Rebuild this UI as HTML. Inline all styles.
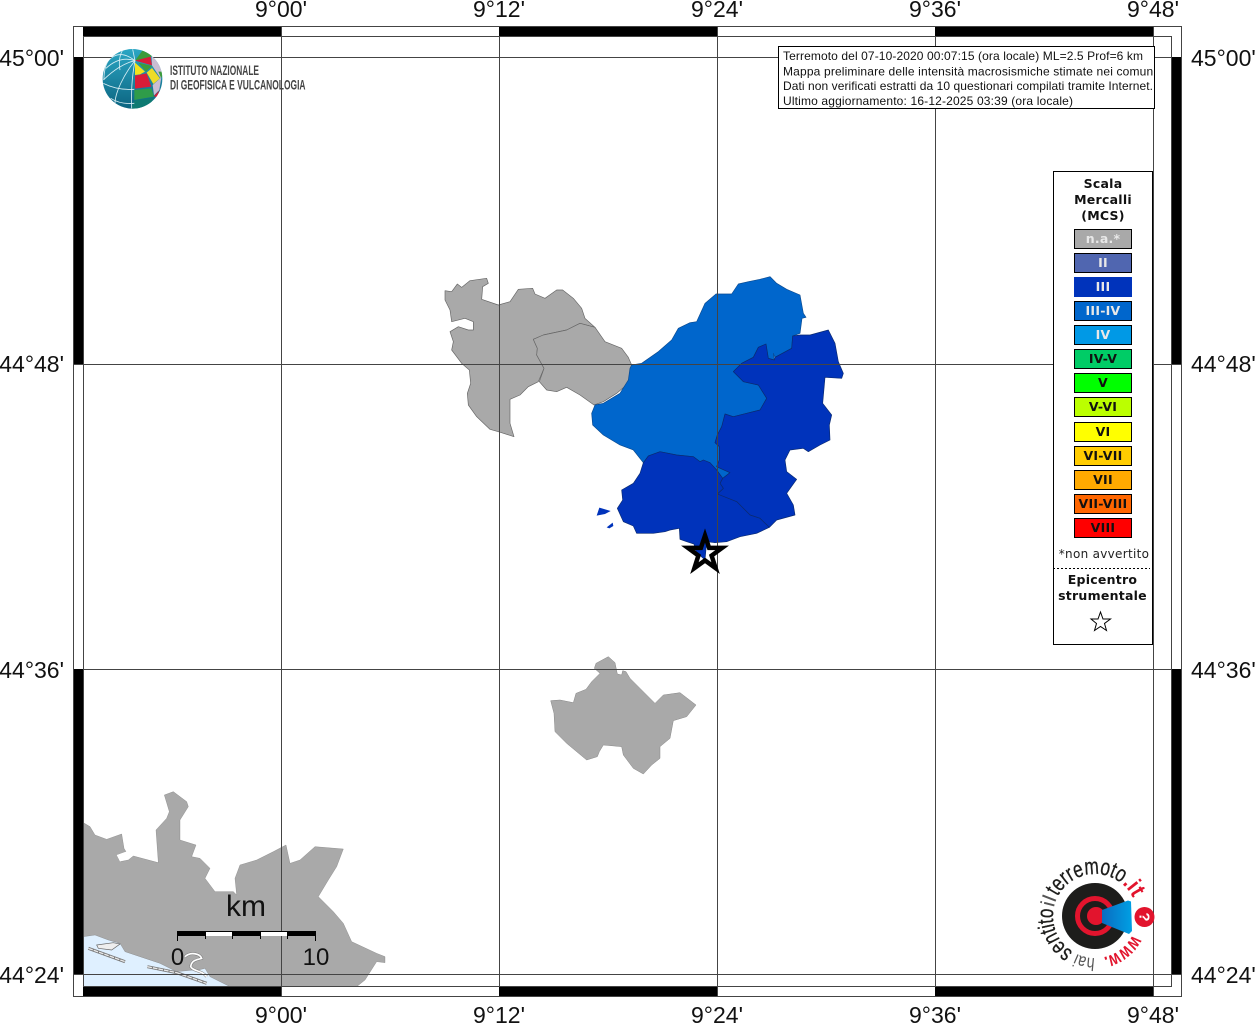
<!DOCTYPE html>
<html><head><meta charset="utf-8"><style>
html,body{margin:0;padding:0;background:#fff;width:1255px;height:1024px;overflow:hidden}
svg{display:block;filter:blur(.3px)}
.l{font-family:"Liberation Sans",sans-serif;font-size:23px;fill:#111}
.d{font-family:"DejaVu Sans",sans-serif;font-size:12.5px;font-weight:bold;text-anchor:middle;letter-spacing:.25px}
.i{font-family:"Liberation Sans",sans-serif;font-size:12px;fill:#111}
</style></head><body>
<svg width="1255" height="1024" viewBox="0 0 1255 1024" xmlns="http://www.w3.org/2000/svg">
<defs>
<clipPath id="map"><rect x="83" y="36" width="1088" height="950"/></clipPath>
<clipPath id="ball"><circle cx="127.5" cy="116.5" r="89.5"/></clipPath>
<clipPath id="ib"><rect x="779" y="47" width="375" height="61"/></clipPath>
<linearGradient id="bg" x1="0" y1="0" x2="0" y2="1"><stop offset="0" stop-color="#2ba6c4"/><stop offset="1" stop-color="#0c6480"/></linearGradient>
<linearGradient id="cone" x1="0" y1="0" x2="1" y2="0"><stop offset="0" stop-color="#0a6cc0"/><stop offset="1" stop-color="#00a0e4"/></linearGradient>
<path id="ring" d="M1095 958A42 42 0 1 1 1095 874A42 42 0 1 1 1095 958"/>
</defs>
<rect width="1255" height="1024" fill="#fff"/>

<g clip-path="url(#map)">
<!-- Bottom-left region -->
<g transform="translate(70,780) scale(.33333)">
<rect x="30" y="465" width="480" height="170" fill="#dff0ff"/>
<polygon fill="#a9a9a9" stroke="#777" stroke-width="1" stroke-linejoin="round" points="30,120 40,128 60,140 75,165 110,178 155,162 162,205 168,215 140,225 150,245 175,240 190,228 265,248 258,150 290,115 298,95 283,45 310,35 350,65 355,80 330,120 330,180 378,195 365,230 390,235 420,265 405,295 435,335 490,335 500,345 495,295 510,255 560,240 610,215 648,195 660,250 690,240 735,200 820,207 800,260 775,300 745,350 790,395 820,430 845,485 920,520 945,530 945,548 920,545 885,600 860,620 860,640 480,640 480,620 420,590 405,565 385,570 370,570 320,575 270,550 225,535 165,515 150,490 115,480 75,465 40,470 30,472"/>
<path d="M345 530C360 515 390 520 395 535C380 540 365 540 362 560C370 575 395 570 410 590" fill="none" stroke="#777" stroke-width="8"/>
<path d="M345 530C360 515 390 520 395 535C380 540 365 540 362 560C370 575 395 570 410 590" fill="none" stroke="#fff" stroke-width="5"/>
<polygon fill="#fff" points="140,225 168,215 165,235 150,245"/>
<polygon fill="#eee" stroke="#666" stroke-width="2" points="80,495 130,488 150,492 125,510 85,505"/>
<path d="M55 505L165 545M232 560L320 578M320 578L410 610" stroke="#777" stroke-width="9" fill="none"/>
<path d="M55 505L165 545M232 560L320 578M320 578L410 610" stroke="#e8e8e8" stroke-width="4" fill="none" stroke-dasharray="14 3"/>
</g>

<!-- NW gray -->
<g transform="translate(440,270) scale(.33333)" fill="#a9a9a9" stroke="#666" stroke-width="2" stroke-linejoin="round">
<polygon points="15,62 35,65 52,42 65,52 90,32 140,25 145,40 128,50 125,88 175,105 210,95 235,58 278,55 285,72 315,85 350,60 368,60 400,85 425,115 435,145 465,172 420,160 380,180 310,195 280,208 292,235 290,255 312,295 295,335 265,350 240,375 210,388 210,460 222,500 175,485 150,478 110,440 85,405 82,370 92,340 88,300 65,280 35,240 40,215 30,185 55,170 85,180 100,180 100,155 75,145 35,155 30,120 15,90"/>
<polygon points="280,208 310,195 380,180 420,160 465,172 495,215 545,235 565,262 575,285 565,340 530,370 490,395 462,405 420,375 380,352 350,365 320,360 298,335 312,295 290,255 292,235"/>
</g>

<!-- Blue regions -->
<g transform="translate(590,270) scale(.33333)" stroke="#0a2a70" stroke-width="2" stroke-linejoin="round">
<polygon fill="#0066cc" stroke="#0a4a90" points="125,285 155,280 205,245 245,210 265,175 300,158 320,155 345,100 378,72 425,72 445,42 475,35 510,28 540,20 560,40 590,58 630,75 640,130 648,142 636,145 630,190 608,198 605,235 555,262 550,250 553,270 535,265 528,222 505,232 490,262 455,280 430,305 460,335 505,345 530,385 510,420 470,430 430,440 405,432 395,470 382,495 375,518 388,530 388,570 380,590 420,608 398,625 380,600 360,578 340,570 330,575 310,560 260,555 210,545 175,558 160,578 130,540 90,525 40,495 8,465 5,430 15,405 40,400 90,370 115,330 120,295"/>
<polygon fill="#0033bb" points="430,305 455,280 490,262 505,232 528,222 535,265 553,270 555,262 605,235 608,198 630,195 660,195 715,180 735,220 745,275 760,310 755,325 705,322 698,400 725,435 718,465 720,510 690,525 655,545 640,535 600,540 585,570 590,605 620,628 590,670 610,705 615,735 560,750 538,772 510,745 480,735 440,695 382,672 400,655 390,640 398,625 420,608 380,590 388,570 388,530 375,518 382,495 395,470 405,432 430,440 470,430 510,420 530,385 505,345 460,335"/>
<polygon fill="#0033bb" points="160,578 175,558 210,545 260,555 310,560 330,575 340,570 360,578 380,600 398,625 390,640 400,655 382,672 440,695 480,735 510,745 538,772 500,790 450,800 410,815 375,818 350,815 345,870 318,845 312,822 290,815 270,808 268,775 240,780 225,785 190,790 140,790 130,768 100,755 82,715 98,690 95,660 130,640 150,610"/>
<polygon fill="#0033bb" stroke="none" points="20,737 28,713 62,723 45,732"/>
<polygon fill="#0033bb" stroke="none" points="50,772 68,758 70,768 58,775"/>
</g>

<!-- South gray -->
<g transform="translate(540,650) scale(.33333)">
<polygon fill="#a9a9a9" stroke="#888" stroke-width="1.5" stroke-linejoin="round" points="32,152 60,150 100,158 108,130 138,118 155,95 180,70 163,55 168,40 205,20 225,38 232,72 245,75 248,62 258,65 270,85 300,115 345,160 370,135 420,128 468,165 440,200 400,212 390,265 360,290 360,325 335,345 310,372 280,355 250,315 245,290 190,285 178,305 172,320 140,330 80,280 45,245 42,190"/>
</g>
</g>

<!-- Grid -->
<g stroke="#444" stroke-width="1" fill="none" shape-rendering="crispEdges">
<path d="M281.5 26V996M499.5 26V996M717.5 26V996M935.5 26V996M1153.5 26V996"/>
<path d="M73 57.5H1181M73 364.5H1181M73 669.5H1181M73 974.5H1181"/>
</g>

<!-- Frame -->
<g fill="#000" shape-rendering="crispEdges">
<rect x="83" y="26" width="198" height="10"/><rect x="499" y="26" width="218" height="10"/><rect x="935" y="26" width="218" height="10"/>
<rect x="83" y="987" width="198" height="9"/><rect x="499" y="987" width="218" height="9"/><rect x="935" y="987" width="218" height="9"/>
<rect x="73" y="57" width="10" height="307"/><rect x="73" y="669" width="10" height="305"/>
<rect x="1172" y="57" width="9" height="307"/><rect x="1172" y="669" width="9" height="305"/>
</g>
<g fill="none" stroke="#444" stroke-width="1" shape-rendering="crispEdges">
<rect x="73.5" y="26.5" width="1108" height="970"/>
<rect x="83.5" y="36.5" width="1088" height="950"/>
</g>

<!-- Axis labels -->
<g text-anchor="middle">
<text class="l" x="281" y="17">9°00'</text><text class="l" x="499" y="17">9°12'</text><text class="l" x="717" y="17">9°24'</text><text class="l" x="935" y="17">9°36'</text><text class="l" x="1153" y="17">9°48'</text>
<text class="l" x="281" y="1023">9°00'</text><text class="l" x="499" y="1023">9°12'</text><text class="l" x="717" y="1023">9°24'</text><text class="l" x="935" y="1023">9°36'</text><text class="l" x="1153" y="1023">9°48'</text>
</g>
<g text-anchor="end">
<text class="l" x="64" y="66">45°00'</text><text class="l" x="64" y="372">44°48'</text><text class="l" x="64" y="678">44°36'</text><text class="l" x="64" y="983">44°24'</text>
</g>
<g>
<text class="l" x="1191" y="66">45°00'</text><text class="l" x="1191" y="372">44°48'</text><text class="l" x="1191" y="678">44°36'</text><text class="l" x="1191" y="983">44°24'</text>
</g>

<!-- Epicentre star -->
<polygon points="705,535.5 709.1,547.9 722.1,547.9 711.6,555.6 715.6,568.1 705,560.4 694.4,568.1 698.4,555.6 687.9,547.9 700.9,547.9" fill="none" stroke="#000" stroke-width="4.5"/>

<!-- Scale bar -->
<g shape-rendering="crispEdges">
<rect x="177" y="931" width="139" height="5" fill="#000"/>
<rect x="206" y="932" width="26" height="4" fill="#fff"/><rect x="261" y="932" width="26" height="4" fill="#fff"/>
<path d="M177.5 931V941M315.5 931V941M205.5 936V939M232.5 936V939M260.5 936V939M287.5 936V939" stroke="#000" fill="none"/>
</g>
<text x="246" y="916" text-anchor="middle" font-family="Liberation Sans,sans-serif" font-size="30" fill="#111">km</text>
<text x="177.5" y="965" text-anchor="middle" font-family="Liberation Sans,sans-serif" font-size="24" fill="#111">0</text>
<text x="316" y="965" text-anchor="middle" font-family="Liberation Sans,sans-serif" font-size="24" fill="#111">10</text>

<!-- INGV logo -->
<g transform="translate(90,40) scale(.33333)">
<circle cx="127.5" cy="116.5" r="89.5" fill="url(#bg)"/>
<g clip-path="url(#ball)">
<polygon fill="#3d9b3a" points="135,62 160,28 190,45 180,52"/>
<polygon fill="#d91c38" points="135,62 182,50 186,76 165,70"/>
<polygon fill="#c9bdd2" points="185,48 220,75 212,115 205,105 186,76"/>
<polygon fill="#f3e31c" points="135,68 165,95 150,103 135,105"/>
<polygon fill="#3d9b3a" points="145,68 186,78 168,95"/>
<polygon fill="#3d9b3a" points="205,95 220,95 214,115"/>
<polygon fill="#eedc28" points="170,98 186,84 210,115 190,132"/>
<polygon fill="#d91c38" points="135,107 170,100 184,140 135,146"/>
<polygon fill="#c9bdd2" points="188,135 214,112 208,150 192,166"/>
<polygon fill="#d91c38" points="192,168 208,152 200,172"/>
<polygon fill="#2f9c49" points="133,150 184,145 192,170 133,180"/>
<polygon fill="#0e7a72" points="133,182 192,172 170,215 120,215"/>
<g fill="none" stroke="#d8eef4" stroke-width="2.5">
<path d="M135 62C100 35 75 40 55 62C40 85 42 120 42 120"/>
<path d="M135 62C105 68 70 90 40 120"/>
<path d="M135 62C100 105 75 160 75 190"/>
<path d="M135 62C124 120 124 160 125 205"/>
<path d="M100 28C90 40 85 65 90 90"/>
<path d="M48 85C75 60 105 52 135 62"/>
<path d="M40 130C70 145 100 150 133 148"/>
<path d="M62 175C85 190 110 192 133 190"/>
<path d="M135 62L128 28"/>
</g>
</g>
</g>
<text x="170" y="75" font-family="Liberation Sans,sans-serif" font-weight="bold" font-size="13.5" fill="#444" textLength="89" lengthAdjust="spacingAndGlyphs">ISTITUTO NAZIONALE</text>
<text x="170" y="89.5" font-family="Liberation Sans,sans-serif" font-weight="bold" font-size="13.5" fill="#444" textLength="135.5" lengthAdjust="spacingAndGlyphs">DI GEOFISICA E VULCANOLOGIA</text>

<!-- Info box -->
<rect x="778.5" y="46.5" width="376" height="62" fill="#fff" stroke="#000"/>
<g clip-path="url(#ib)">
<text class="i" x="783" y="60" textLength="360">Terremoto del 07-10-2020 00:07:15 (ora locale) ML=2.5 Prof=6 km</text>
<text class="i" x="783" y="75.5" textLength="373">Mappa preliminare delle intensità macrosismiche stimate nei comuni</text>
<text class="i" x="783" y="90" textLength="370">Dati non verificati estratti da 10 questionari compilati tramite Internet.</text>
<text class="i" x="783" y="105" textLength="290">Ultimo aggiornamento: 16-12-2025 03:39 (ora locale)</text>
</g>

<!-- Legend -->
<rect x="1053.5" y="171.5" width="99" height="473" fill="#fff" stroke="#000"/>
<text class="d" x="1103" y="188" fill="#111">Scala</text>
<text class="d" x="1103" y="204" fill="#111">Mercalli</text>
<text class="d" x="1103" y="220" fill="#111">(MCS)</text>
<g stroke="#000" shape-rendering="crispEdges">
<rect x="1074.5" y="229.5" width="57" height="19" fill="#a9a9a9"/>
<rect x="1074.5" y="253.5" width="57" height="19" fill="#5066b0"/>
<rect x="1074.5" y="277.5" width="57" height="19" fill="#0033bb" stroke="#0033bb"/>
<rect x="1074.5" y="301.5" width="57" height="19" fill="#0066cc"/>
<rect x="1074.5" y="325.5" width="57" height="19" fill="#0099e6"/>
<rect x="1074.5" y="349.5" width="57" height="19" fill="#00cc66"/>
<rect x="1074.5" y="373.5" width="57" height="19" fill="#00ff00"/>
<rect x="1074.5" y="397.5" width="57" height="19" fill="#bbff00"/>
<rect x="1074.5" y="422.5" width="57" height="19" fill="#ffff00"/>
<rect x="1074.5" y="446.5" width="57" height="19" fill="#ffcc00"/>
<rect x="1074.5" y="470.5" width="57" height="19" fill="#ffaa00"/>
<rect x="1074.5" y="494.5" width="57" height="19" fill="#ff6600"/>
<rect x="1074.5" y="518.5" width="57" height="19" fill="#ff0000"/>
</g>
<text class="d" x="1103" y="243" fill="#e8e8e8">n.a.*</text>
<text class="d" x="1103" y="267" fill="#e8e8e8">II</text>
<text class="d" x="1103" y="291" fill="#e8e8e8">III</text>
<text class="d" x="1103" y="315" fill="#e8e8e8">III-IV</text>
<text class="d" x="1103" y="339" fill="#e8e8e8">IV</text>
<text class="d" x="1103" y="363" fill="#111">IV-V</text>
<text class="d" x="1103" y="387" fill="#111">V</text>
<text class="d" x="1103" y="411" fill="#111">V-VI</text>
<text class="d" x="1103" y="436" fill="#111">VI</text>
<text class="d" x="1103" y="460" fill="#111">VI-VII</text>
<text class="d" x="1103" y="484" fill="#111">VII</text>
<text class="d" x="1103" y="508" fill="#111">VII-VIII</text>
<text class="d" x="1103" y="532" fill="#111">VIII</text>
<text class="d" x="1104" y="558" fill="#222" style="font-weight:normal;letter-spacing:.3px;font-size:12px">*non avvertito</text>
<path d="M1053 568.5H1150" stroke="#000" stroke-dasharray="2 2"/>
<text class="d" x="1102.5" y="584" fill="#111">Epicentro</text>
<text class="d" x="1102.5" y="600" fill="#111">strumentale</text>
<polygon points="1100.5,612 1103,619 1110.5,619 1104.5,623.5 1106.5,630.5 1100.5,626.5 1094.5,630.5 1096.5,623.5 1091,619 1098,619" fill="#fff" stroke="#000"/>

<!-- hai sentito logo -->
<circle cx="1095" cy="916" r="33" fill="#1d1d1b"/>
<circle cx="1095" cy="916" r="17.5" fill="none" stroke="#e2142d" stroke-width="5"/>
<circle cx="1096" cy="916" r="9" fill="#e2142d"/>
<polygon points="1102,910 1128,900.5 1131,901.5 1132,931 1129,934 1102,923" fill="url(#cone)"/>
<circle cx="1144.5" cy="917" r="10" fill="#e2142d"/>
<text x="1144.5" y="917" transform="rotate(90 1144.5 917)" dy="5" text-anchor="middle" font-family="Liberation Sans,sans-serif" font-weight="bold" font-size="15" fill="#fff">?</text>
<g font-family="Liberation Sans,sans-serif" font-size="23">
<text fill="#555" font-size="18" textLength="19" lengthAdjust="spacingAndGlyphs"><textPath href="#ring" startOffset="0">hai</textPath></text>
<text fill="#1d1d1b" stroke="#1d1d1b" stroke-width=".3" textLength="50" lengthAdjust="spacingAndGlyphs"><textPath href="#ring" startOffset="23">sentito</textPath></text>
<text fill="#555" font-size="20" textLength="10" lengthAdjust="spacingAndGlyphs"><textPath href="#ring" startOffset="74">il</textPath></text>
<text fill="#1d1d1b" stroke="#1d1d1b" stroke-width=".3" textLength="74" lengthAdjust="spacingAndGlyphs"><textPath href="#ring" startOffset="86">terremoto</textPath></text>
<text fill="#e2142d" font-weight="bold" textLength="18" lengthAdjust="spacingAndGlyphs"><textPath href="#ring" startOffset="161">.it</textPath></text>
<text fill="#e2142d" font-weight="bold" font-size="20" textLength="38" lengthAdjust="spacingAndGlyphs"><textPath href="#ring" startOffset="217">www.</textPath></text>
</g>
</svg>
</body></html>
